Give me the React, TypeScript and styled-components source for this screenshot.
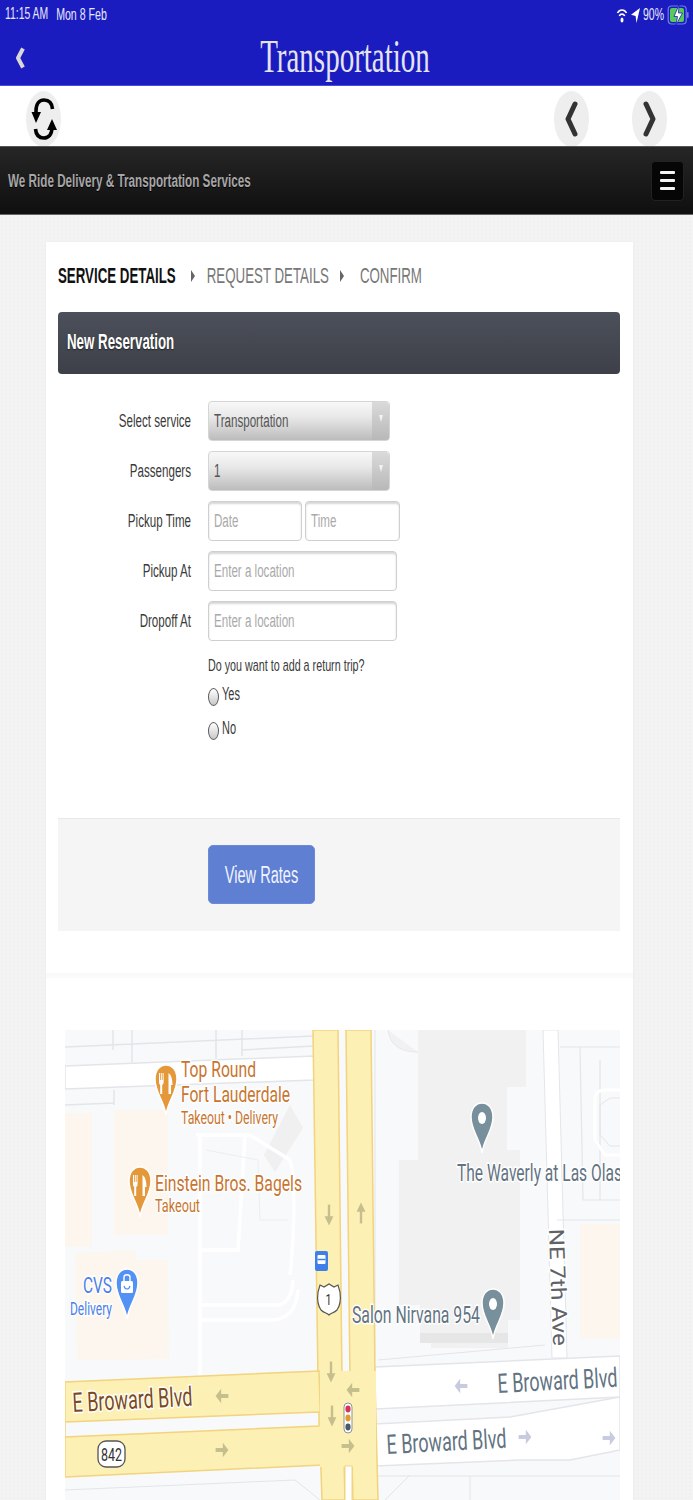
import React from "react";
import styled, { createGlobalStyle } from "styled-components";

const Global = createGlobalStyle`
  html, body { margin: 0; padding: 0; background: #f3f3f3; }
  body { font-family: "Liberation Sans", Arial, sans-serif; }
  #root { height: 1500px; overflow: hidden; }
  * { box-sizing: border-box; }
`;

const Page = styled.div`
  width: 693px;
  height: 1500px;
  overflow: hidden;
  background-color: #f3f3f3;
  background-image: radial-gradient(#f0f0f0 1px, transparent 1px);
  background-size: 4px 4px;
`;

/* The reference is stretched vertically: every glyph is 1.62x taller than wide. */
const Tall = styled.span<{ $size: number; $color?: string; $weight?: number; $shadow?: string }>`
  display: inline-block;
  transform: translateY(-1px) scaleY(1.62);
  white-space: nowrap;
  line-height: 1;
  font-size: ${(p) => p.$size}px;
  color: ${(p) => p.$color ?? "#3a3a3a"};
  font-weight: ${(p) => p.$weight ?? 400};
  text-shadow: ${(p) => p.$shadow ?? "none"};
`;

const BlueHeader = styled.header`
  height: 86px;
  background: #1a1cc0;
  border-bottom: 1px solid #4a4ce0;
  display: flex;
  flex-direction: column;
`;

const StatusBar = styled.div`
  height: 28px;
  padding: 2px 3px 0 5px;
  display: flex;
  align-items: center;
  justify-content: space-between;
`;

const StatusGroup = styled.div<{ $gap: number }>`
  display: flex;
  align-items: center;
  gap: ${(p) => p.$gap}px;
`;

const NavRow = styled.div`
  flex: 1;
  display: flex;
  align-items: center;
  padding: 2px 0 0 15px;
`;

const NavBack = styled.svg`
  width: 12px;
  height: 24px;
  flex: none;
`;

const NavTitle = styled.div`
  flex: 1;
  display: flex;
  justify-content: center;
  margin-right: 30px;
  font-family: "Liberation Serif", "Times New Roman", serif;
`;

const Toolbar = styled.div`
  height: 60px;
  background: #fff;
  display: flex;
  align-items: flex-start;
  padding: 5px 26px 0 26px;
  overflow: hidden;
`;

const RoundButton = styled.div<{ $push?: boolean; $space?: number }>`
  width: 35px;
  height: 56px;
  flex: none;
  border-radius: 50%;
  background: #eeeeee;
  display: flex;
  align-items: center;
  justify-content: center;
  margin-left: ${(p) => (p.$push ? "auto" : `${p.$space ?? 0}px`)};
`;

const BrandBar = styled.div`
  height: 69px;
  background: linear-gradient(#262626, #0f0f0f);
  border-top: 1px solid #555;
  border-bottom: 1px solid #666;
  display: flex;
  align-items: center;
  justify-content: space-between;
  padding: 0 9px 0 8px;
`;

const MenuButton = styled.div`
  width: 33px;
  height: 40px;
  background: #060606;
  border: 1px solid #222;
  border-radius: 4px;
  display: flex;
  flex-direction: column;
  align-items: center;
  justify-content: center;
  gap: 5px;
`;

const MenuBar = styled.span`
  width: 15px;
  height: 3px;
  background: #f4f4f4;
  border-radius: 1px;
`;

const Card = styled.main`
  margin: 27px 0 0 46px;
  width: 587px;
  background: #fff;
  box-shadow: 0 0 3px rgba(0, 0, 0, 0.03);
  padding: 0 13px 0 12px;
`;

const Steps = styled.div`
  height: 70px;
  display: flex;
  align-items: center;
`;

const StepArrow = styled.i<{ $l: number; $r: number }>`
  width: 0;
  height: 0;
  margin: -2px ${(p) => p.$r}px 0 ${(p) => p.$l}px;
  border-left: 4px solid #666;
  border-top: 6px solid transparent;
  border-bottom: 6px solid transparent;
`;

const PanelHead = styled.div`
  height: 62px;
  background: linear-gradient(#4c505a, #3d4048);
  border-radius: 4px;
  display: flex;
  align-items: center;
  padding-left: 9px;
`;

const FormBody = styled.div`
  padding-top: 27px;
  height: 444px;
`;

const Row = styled.div`
  height: 40px;
  margin-bottom: 10px;
  display: flex;
  align-items: center;
`;

const Label = styled.div`
  width: 133px;
  flex: none;
  display: flex;
  justify-content: flex-end;
  margin-right: 17px;
`;

const Select = styled.div<{ $w: number }>`
  width: ${(p) => p.$w}px;
  height: 40px;
  border: 1px solid #d5d5d5;
  border-radius: 4px;
  background: linear-gradient(#f8f8f8 0%, #e8e8e8 40%, #bcbcbc 100%);
  display: flex;
  align-items: center;
  padding-left: 5px;
  position: relative;
`;

const SelectCaret = styled.div`
  position: absolute;
  top: 0;
  right: 0;
  bottom: 0;
  width: 17px;
  border-radius: 0 4px 4px 0;
  background: linear-gradient(#dadada, #b8b8b8);
  display: flex;
  justify-content: center;
  padding-top: 13px;
  &::after {
    content: "";
    width: 0;
    height: 0;
    border-left: 2.5px solid transparent;
    border-right: 2.5px solid transparent;
    border-top: 7px solid #f2f2f2;
  }
`;

const Field = styled.div<{ $w: number; $ml?: number }>`
  width: ${(p) => p.$w}px;
  height: 40px;
  margin-left: ${(p) => p.$ml ?? 0}px;
  border: 1px solid #cfcfcf;
  border-radius: 4px;
  background: #fff;
  box-shadow: inset 0 2px 2px rgba(0, 0, 0, 0.16);
  display: flex;
  align-items: center;
  padding-left: 5px;
  flex: none;
`;

const Options = styled.div`
  margin-left: 150px;
  padding-top: 4px;
  display: flex;
  flex-direction: column;
`;

const Question = styled.div`
  height: 22px;
  display: flex;
  align-items: center;
  margin-bottom: 5px;
`;

const RadioRow = styled.div`
  height: 34px;
  display: flex;
  align-items: flex-start;
  gap: 3px;
`;

const Radio = styled.span`
  width: 11px;
  height: 18px;
  margin-top: 6px;
  border-radius: 50%;
  border: 1px solid #5a5a5a;
  background: linear-gradient(#ffffff, #c8c8c8);
  flex: none;
`;

const RadioText = styled.div`
  padding-top: 3px;
`;

const Footer = styled.div`
  height: 113px;
  background: #f5f5f5;
  border-top: 1px solid #e8e8e8;
  padding: 26px 0 0 150px;
`;

const PrimaryButton = styled.div`
  width: 107px;
  height: 59px;
  padding-top: 3px;
  background: #5f7fd3;
  border: 1px solid #6d8ad8;
  border-radius: 5px;
  display: flex;
  align-items: center;
  justify-content: center;
`;

const Divider = styled.div`
  height: 5px;
  margin: 42px -13px 0 -12px;
  background: #fafafa;
`;

const MapFrame = styled.div`
  margin: 52px 0 0 7px;
  width: 555px;
  height: 520px;
  overflow: hidden;
`;

const MapSvg = styled.svg`
  display: block;
  width: 555px;
  height: 520px;
  background: #f8f9fa;
`;

const MapLabel = styled.text<{ $fill: string; $halo?: number }>`
  font-family: Roboto, "Liberation Sans", sans-serif;
  fill: ${(p) => p.$fill};
  stroke: #fff;
  stroke-width: ${(p) => p.$halo ?? 3}px;
  paint-order: stroke;
`;

const ORANGE = "#c8752f";
const BLUE = "#4a80e8";
const SLATE = "#627382";

type LabelProps = { x: number; y: number; w: number; size: number; fill: string; rot?: number; text: string; halo?: number };
const Lbl = ({ x, y, w, size, fill, rot, text, halo }: LabelProps) => (
  <MapLabel
    x={x}
    y={y}
    fontSize={size}
    textLength={w}
    lengthAdjust="spacingAndGlyphs"
    $fill={fill}
    $halo={halo}
    transform={rot ? `rotate(${rot} ${x} ${y})` : undefined}
  >
    {text}
  </MapLabel>
);

const PIN = "M0 0C-2 -15 -11 -22 -11 -36C-11 -45 -6 -50 0 -50C6 -50 11 -45 11 -36C11 -22 2 -15 0 0Z";

const Pin = ({ x, y, fill, children }: { x: number; y: number; fill: string; children?: React.ReactNode }) => (
  <g transform={`translate(${x} ${y})`}>
    <path d={PIN} fill={fill} stroke="#fff" strokeWidth={1.5} />
    {children}
  </g>
);

const Fork = () => (
  <g fill="#fff">
    <path d="M-7 -42H-6V-35H-5.2V-42H-4.2V-35H-3.4V-42H-2.4V-33C-2.4 -31 -3.2 -30.5 -3.8 -30V-21H-5.8V-30C-6.4 -30.5 -7 -31 -7 -33Z" />
    <path d="M2.5 -21V-42C5.5 -40 6.5 -35 6.5 -30H5V-21Z" />
  </g>
);

/* the map is stretched like the rest of the picture: arrows are drawn upright, then squeezed */
const Arrow = ({ x, y, dir, color }: { x: number; y: number; dir: number; color: string }) => (
  <g transform={`translate(${x} ${y}) scale(0.8 1.3) rotate(${dir})`}>
    <path d="M0 8V-2" fill="none" stroke={color} strokeWidth={3} />
    <path d="M0 -8L5.5 -1H-5.5Z" fill={color} />
  </g>
);

const MapDrawing = () => {
  const yellow = "#fdf0b5";
  const edge = "#f2d37e";
  const line = "#e3e5ea";
  const beige = "#fdf6ee";
  const onYellow = "#c5be8d";
  const onWhite = "#c8cade";
  return (
    <MapSvg viewBox="65 1030 555 520">
      {/* white streets */}
      <polygon points="65,1066 314,1056 314,1080 65,1089" fill="#fff" stroke={line} strokeWidth={1.5} />
      <polygon points="543,1030 558,1030 567,1358 552,1358" fill="#fff" stroke={line} strokeWidth={1} />
      <polygon points="375,1367 620,1356 620,1397 375,1409" fill="#fff" stroke={line} strokeWidth={1.5} />
      <polygon points="375,1424 510,1417 620,1397 620,1450 570,1460 520,1460 375,1466" fill="#fff" stroke={line} strokeWidth={1.5} />

      {/* city block outlines */}
      <path d="M65 1047L314 1036M113 1030V1050M132 1030V1062M216 1030V1060M242 1030V1056M242 1050L314 1046M65 1105L115 1103M114 1090V1105" fill="none" stroke={line} strokeWidth={1.5} />
      <path d="M560 1047H620M580 1047L583 1200H620M557 1220H620M600 1060V1200" fill="none" stroke={line} strokeWidth={1.2} />
      <path d="M620 1090H605Q595 1090 595 1100V1140L605 1155H620" fill="none" stroke="#fff" strokeWidth={3} />
      <path d="M620 1098H610L600 1105V1135L610 1146H620" fill="none" stroke={line} strokeWidth={1} />
      <path d="M375 1030V1360M378 1360L545 1345" fill="none" stroke={line} strokeWidth={1} />
      <path d="M65 1490L295 1480L320 1500" fill="none" stroke={line} strokeWidth={1} />
      <path d="M375 1476H620M385 1500L410 1475M470 1500V1476" fill="none" stroke={line} strokeWidth={1} />

      {/* beige buildings */}
      <rect x="65" y="1113" width="27" height="134" fill={beige} />
      <rect x="114" y="1110" width="54" height="125" fill={beige} />
      <polygon points="75,1253 135,1250 136,1260 168,1260 169,1359 77,1360" fill={beige} />
      <rect x="580" y="1224" width="40" height="115" fill={beige} />

      {/* grey buildings */}
      <polygon points="418,1030 526,1030 526,1087 507,1087 507,1150 520,1150 520,1320 508,1320 508,1348 431,1348 431,1333 420,1333 420,1305 399,1305 399,1160 418,1160" fill="#f1f1f1" />
      <rect x="420" y="1333" width="88" height="10" fill="#e6e6e6" />
      <polygon points="290,1105 303,1128 275,1172 264,1155" fill="#f0f0f0" />
      <path d="M388 1030C390 1045 400 1052 418 1052" fill="#f1f1f1" stroke="#e8e8e8" />

      {/* parking lot lanes */}
      <path d="M196 1135H250L290 1160C296 1180 294 1240 290 1275M245 1135L238 1250H198M200 1135V1375M200 1305H280Q292 1300 293 1280M200 1320H270Q296 1320 298 1290" fill="none" stroke="#fff" strokeWidth={3.5} />
      <path d="M206 1150L258 1160L260 1220H288" fill="none" stroke="#eceef0" strokeWidth={1} />

      {/* yellow roads */}
      <polygon points="313,1030 338,1030 342,1380 345,1500 322,1500 318,1380" fill={yellow} stroke={edge} strokeWidth={1.5} />
      <polygon points="346,1030 371,1030 375,1380 378,1500 353,1500 350,1380" fill={yellow} stroke={edge} strokeWidth={1.5} />
      <polygon points="65,1382 319,1371 322,1465 65,1477" fill={yellow} stroke={edge} strokeWidth={1.5} />
      <rect x="320" y="1371" width="56" height="96" fill={yellow} />
      <polygon points="65,1422 319,1412 319,1426 65,1437" fill="#f8f9fa" stroke={edge} strokeWidth={1.5} />
      <rect x="345" y="1466" width="7" height="40" fill="#fff" stroke={edge} />

      {/* direction arrows */}
      <Arrow x={329} y={1215} dir={180} color={onYellow} />
      <Arrow x={361} y={1213} dir={0} color={onYellow} />
      <Arrow x={331} y={1372} dir={180} color={onYellow} />
      <Arrow x={353} y={1390} dir={-90} color={onYellow} />
      <Arrow x={332} y={1416} dir={180} color={onYellow} />
      <Arrow x={348} y={1446} dir={90} color={onYellow} />
      <Arrow x={222} y={1396} dir={-90} color={onYellow} />
      <Arrow x={222} y={1450} dir={90} color={onYellow} />
      <Arrow x={461} y={1386} dir={-90} color={onWhite} />
      <Arrow x={525} y={1437} dir={90} color={onWhite} />
      <Arrow x={609} y={1438} dir={90} color={onWhite} />

      {/* transit + road shields */}
      <rect x="315" y="1251" width="13" height="20" rx="2" fill="#3f7fe8" />
      <rect x="317.5" y="1255" width="8" height="9" rx="1" fill="#fff" />
      <path d="M317.5 1259.5H325.5M318 1267H320M323 1267H325" stroke="#3f7fe8" strokeWidth={1.4} />
      <path d="M320 1285L324 1287L329 1284L334 1287L338 1285L340 1292C341 1300 340 1306 337 1310C334 1313 331 1313 329 1315C327 1313 324 1313 321 1310C318 1306 317 1300 318 1292Z" fill="#fff" stroke="#555" strokeWidth={1.2} />
      <Lbl x={325.5} y={1305} w={6} size={15} fill="#333" text="1" halo={0} />
      <rect x="98" y="1441" width="27" height="26" rx="8" fill="#fff" stroke="#555" strokeWidth={1.3} />
      <Lbl x={101} y={1461} w={21} size={18} fill="#333" text="842" halo={0} />

      {/* traffic light */}
      <rect x="344" y="1403" width="8" height="30" rx="4" fill="#fff" stroke="#8a93a0" />
      <ellipse cx="348" cy="1409" rx="2.6" ry="3.4" fill="#d8344f" />
      <ellipse cx="348" cy="1418" rx="2.6" ry="3.4" fill="#e39a2c" />
      <ellipse cx="348" cy="1427" rx="2.6" ry="3.4" fill="#4a5a66" />

      {/* POI pins */}
      <Pin x={166} y={1115} fill="#e4983a"><Fork /></Pin>
      <Pin x={140} y={1217} fill="#e4983a"><Fork /></Pin>
      <Pin x={127} y={1319} fill="#5491f5">
        <rect x="-6" y="-38" width="12" height="12" rx="1.5" fill="#fff" />
        <path d="M-3 -38V-42C-3 -45 3 -45 3 -42V-38" fill="none" stroke="#fff" strokeWidth={1.4} />
        <path d="M-3 -33C-2 -29 2 -29 3 -33" fill="none" stroke="#5491f5" strokeWidth={1.2} />
      </Pin>
      <Pin x={482} y={1153} fill="#78909c">
        <ellipse cx="0" cy="-35" rx="4" ry="6" fill="#fff" />
      </Pin>
      <Pin x={493} y={1339} fill="#78909c">
        <ellipse cx="0" cy="-35" rx="4" ry="6" fill="#fff" />
      </Pin>

      {/* labels */}
      <Lbl x={181} y={1077} w={75} size={22} fill={ORANGE} text="Top Round" />
      <Lbl x={181} y={1102} w={109} size={22} fill={ORANGE} text="Fort Lauderdale" />
      <Lbl x={181} y={1124} w={97} size={18} fill={ORANGE} text="Takeout • Delivery" />
      <Lbl x={155} y={1191} w={147} size={22} fill={ORANGE} text="Einstein Bros. Bagels" />
      <Lbl x={155} y={1212} w={45} size={18} fill={ORANGE} text="Takeout" />
      <Lbl x={83} y={1293} w={29} size={22} fill={BLUE} text="CVS" />
      <Lbl x={70} y={1315} w={42} size={18} fill={BLUE} text="Delivery" />
      <Lbl x={457} y={1181} w={165} size={24} fill={SLATE} text="The Waverly at Las Olas" />
      <Lbl x={352} y={1323} w={128} size={24} fill={SLATE} text="Salon Nirvana 954" />
      <Lbl x={73} y={1412} w={120} size={27} fill="#7a4a22" rot={-3} text="E Broward Blvd" />
      <Lbl x={498} y={1393} w={120} size={27} fill={SLATE} rot={-3} text="E Broward Blvd" />
      <Lbl x={387} y={1454} w={120} size={27} fill={SLATE} rot={-3} text="E Broward Blvd" />
      <Lbl x={549} y={1229} w={117} size={21} fill="#5f6368" rot={88} text="NE 7th Ave" />
    </MapSvg>
  );
};

const Chevron = ({ d }: { d: string }) => (
  <svg width="17" height="36" viewBox="0 0 17 36">
    <path d={d} fill="none" stroke="#333" strokeWidth={5} strokeLinecap="round" strokeLinejoin="round" />
  </svg>
);

export default function App() {
  return (
    <Page>
      <Global />
      <BlueHeader>
        <StatusBar>
          <StatusGroup $gap={8}>
            <Tall $size={10.4} $color="#e8e8f8">11:15 AM</Tall>
            <Tall $size={10.6} $color="#e8e8f8">Mon 8 Feb</Tall>
          </StatusGroup>
          <StatusGroup $gap={3}>
            <svg width="12" height="17" viewBox="0 0 11 17" fill="none" stroke="#fff" strokeWidth={1.6}>
              <path d="M1 6C3 2 8 2 10 6M2.8 9C4 6.5 7 6.5 8.2 9" />
              <ellipse cx="5.5" cy="13" rx="1.5" ry="2.6" fill="#fff" stroke="none" />
            </svg>
            <svg width="9" height="17" viewBox="0 0 9 17">
              <path d="M9 1L5.5 16L4.6 9L0 7.8Z" fill="#fff" />
            </svg>
            <Tall $size={10.5} $color="#e8e8f8">90%</Tall>
            <svg width="23" height="22" viewBox="0 0 22 22">
              <rect x="0.7" y="2" width="18" height="18" rx="3.5" fill="none" stroke="#6d7fe0" strokeWidth={1.2} />
              <rect x="2.5" y="4" width="14" height="14" rx="2" fill="#58c95c" />
              <rect x="19.5" y="8" width="1.6" height="6" rx="0.8" fill="#6d7fe0" />
              <path d="M11.5 1L6.5 12.5H10L8.5 21L15 9H11Z" fill="#fff" stroke="#1a1cc0" strokeWidth={0.8} />
            </svg>
          </StatusGroup>
        </StatusBar>
        <NavRow>
          <NavBack viewBox="0 0 12 24">
            <path d="M8 2.5L3 12L8 21.5" fill="none" stroke="#d8d8d8" strokeWidth={4} strokeLinejoin="round" />
          </NavBack>
          <NavTitle>
            <Tall $size={29} $color="#e4e4ee">Transportation</Tall>
          </NavTitle>
        </NavRow>
      </BlueHeader>

      <Toolbar>
        <RoundButton>
          <svg width="26" height="50" viewBox="0 0 26 50">
            <path d="M5 21V17C5 9 9 6 13 6C18 6 21 9 21.5 15" fill="none" stroke="#000" strokeWidth={3.6} />
            <path d="M0.5 18H10L5 29Z" fill="#000" />
            <path d="M21 29V33C21 41 17 44 13 44C8 44 5 41 4.5 35" fill="none" stroke="#000" strokeWidth={3.6} />
            <path d="M26 36H16L21 25Z" fill="#000" />
          </svg>
        </RoundButton>
        <RoundButton $push>
          <Chevron d="M12 3L5 18L12 33" />
        </RoundButton>
        <RoundButton $space={43}>
          <Chevron d="M5 3L12 18L5 33" />
        </RoundButton>
      </Toolbar>

      <BrandBar>
        <Tall $size={11.7} $weight={700} $color="#a6a6a6" $shadow="0 1px 0 #000">We Ride Delivery &amp; Transportation Services</Tall>
        <MenuButton>
          <MenuBar />
          <MenuBar />
          <MenuBar />
        </MenuButton>
      </BrandBar>

      <Card>
        <Steps>
          <Tall $size={13.3} $weight={700} $color="#111">SERVICE DETAILS</Tall>
          <StepArrow $l={15} $r={12} />
          <Tall $size={13.3} $color="#777">REQUEST DETAILS</Tall>
          <StepArrow $l={11} $r={16} />
          <Tall $size={13.3} $color="#777">CONFIRM</Tall>
        </Steps>
        <PanelHead>
          <Tall $size={13.3} $weight={700} $color="#fff" $shadow="0 1px 1px #222">New Reservation</Tall>
        </PanelHead>
        <FormBody>
          <Row>
            <Label><Tall $size={11.6}>Select service</Tall></Label>
            <Select $w={182}>
              <Tall $size={11.6} $color="#555">Transportation</Tall>
              <SelectCaret />
            </Select>
          </Row>
          <Row>
            <Label><Tall $size={11.6}>Passengers</Tall></Label>
            <Select $w={182}>
              <Tall $size={11.6} $color="#555">1</Tall>
              <SelectCaret />
            </Select>
          </Row>
          <Row>
            <Label><Tall $size={11.6}>Pickup Time</Tall></Label>
            <Field $w={94}><Tall $size={11.6} $color="#aaa">Date</Tall></Field>
            <Field $w={95} $ml={3}><Tall $size={11.6} $color="#aaa">Time</Tall></Field>
          </Row>
          <Row>
            <Label><Tall $size={11.6}>Pickup At</Tall></Label>
            <Field $w={189}><Tall $size={11.6} $color="#aaa">Enter a location</Tall></Field>
          </Row>
          <Row>
            <Label><Tall $size={11.6}>Dropoff At</Tall></Label>
            <Field $w={189}><Tall $size={11.6} $color="#aaa">Enter a location</Tall></Field>
          </Row>
          <Options>
            <Question><Tall $size={10.75}>Do you want to add a return trip?</Tall></Question>
            <RadioRow>
              <Radio />
              <RadioText><Tall $size={11}>Yes</Tall></RadioText>
            </RadioRow>
            <RadioRow>
              <Radio />
              <RadioText><Tall $size={11}>No</Tall></RadioText>
            </RadioRow>
          </Options>
        </FormBody>
        <Footer>
          <PrimaryButton>
            <Tall $size={14.6} $color="#f2f5ff">View Rates</Tall>
          </PrimaryButton>
        </Footer>
        <Divider />
        <MapFrame>
          <MapDrawing />
        </MapFrame>
      </Card>
    </Page>
  );
}
